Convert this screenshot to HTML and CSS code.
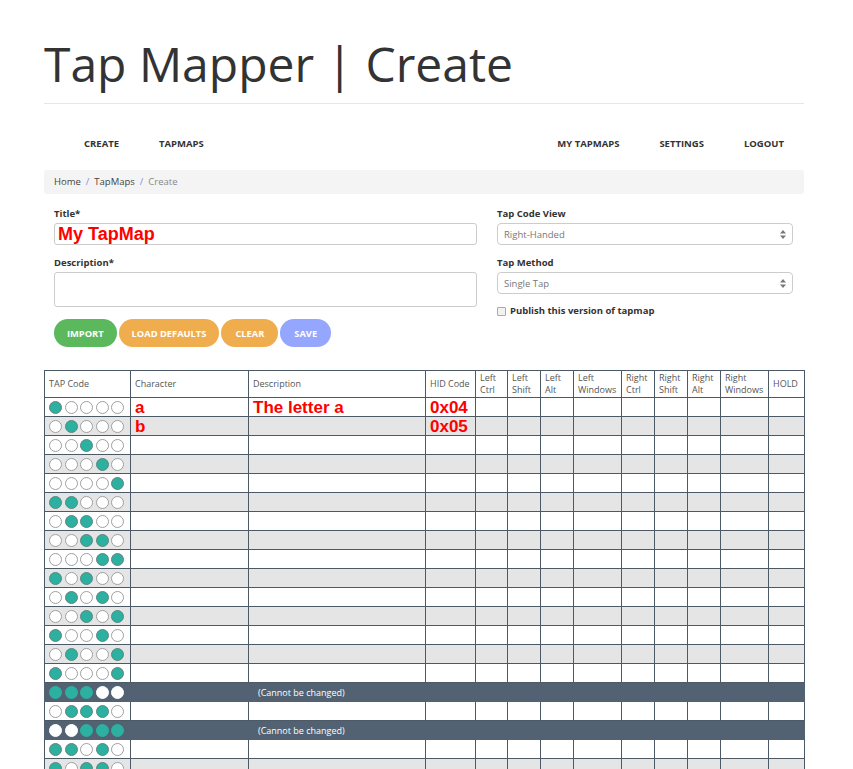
FILE: index.html
```html
<!DOCTYPE html>
<html lang="en">
<head>
  <meta charset="UTF-8" />
  <meta name="viewport" content="width=device-width, initial-scale=1.0"/>
  <title>Tap Mapper | Create</title>
  <link rel="stylesheet" href="styles.css">
</head>
<body>
  <div class="container">
    <h1 class="page-title">Tap Mapper | Create</h1>

    <nav class="navbar">
      <ul class="nav">
        <li>CREATE</li>
        <li>TAPMAPS</li>
      </ul>
      <ul class="nav">
        <li>MY TAPMAPS</li>
        <li>SETTINGS</li>
        <li>LOGOUT</li>
      </ul>
    </nav>

    <ol class="breadcrumb">
      <li><a href="#">Home</a></li>
      <li><a href="#">TapMaps</a></li>
      <li class="active">Create</li>
    </ol>

    <div class="form-row">
      <div class="col-left">
        <div class="form-group">
          <label>Title*</label>
          <div class="input title-input">My TapMap</div>
        </div>
        <div class="form-group">
          <label>Description*</label>
          <div class="input textarea"></div>
        </div>
        <div class="btn-group">
          <button class="btn btn-green">IMPORT</button>
          <button class="btn btn-orange">LOAD DEFAULTS</button>
          <button class="btn btn-orange btn-wide">CLEAR</button>
          <button class="btn btn-blue btn-wide">SAVE</button>
        </div>
      </div>

      <div class="col-right">
        <div class="form-group">
          <label>Tap Code View</label>
          <div class="input select">
            <span>Right-Handed</span>
            <svg width="6" height="9" viewBox="0 0 6 9"><path d="M3 0 L6 3.5 L0 3.5 Z M3 9 L6 5.5 L0 5.5 Z" fill="#777"/></svg>
          </div>
        </div>
        <div class="form-group">
          <label>Tap Method</label>
          <div class="input select">
            <span>Single Tap</span>
            <svg width="6" height="9" viewBox="0 0 6 9"><path d="M3 0 L6 3.5 L0 3.5 Z M3 9 L6 5.5 L0 5.5 Z" fill="#777"/></svg>
          </div>
        </div>
        <div class="check-row">
          <span class="checkbox"></span>
          <span>Publish this version of tapmap</span>
        </div>
      </div>
    </div>

    <table class="tapmap">
      <colgroup>
        <col style="width:86px"><col style="width:118px"><col style="width:177px"><col style="width:50px">
        <col style="width:32px"><col style="width:33px"><col style="width:33px"><col style="width:48px">
        <col style="width:33px"><col style="width:33px"><col style="width:33px"><col style="width:48px">
        <col style="width:36px">
      </colgroup>
      <thead>
        <tr>
          <th>TAP Code</th>
          <th>Character</th>
          <th>Description</th>
          <th>HID Code</th>
          <th>Left Ctrl</th>
          <th>Left Shift</th>
          <th>Left Alt</th>
          <th>Left Windows</th>
          <th>Right Ctrl</th>
          <th>Right Shift</th>
          <th>Right Alt</th>
          <th>Right Windows</th>
          <th>HOLD</th>
        </tr>
      </thead>
      <tbody id="rows"></tbody>
    </table>
  </div>

  <script>
    const codes = [
      "10000", "01000", "00100", "00010", "00001",
      "11000", "01100", "00110", "00011", "10100",
      "01010", "00101", "10010", "01001", "10001",
      "11100", "01110", "00111", "11010", "10110",
      "10011", "11001", "01101", "01011", "11110"
    ];
    const locked = ["11100", "00111"];
    const values = {
      "10000": { ch: "a", desc: "The letter a", hid: "0x04" },
      "01000": { ch: "b", desc: "", hid: "0x05" }
    };

    const body = document.getElementById("rows");
    codes.forEach(code => {
      const tr = document.createElement("tr");
      const dots = code.split("").map(c =>
        `<span class="dot${c === "1" ? " on" : ""}"></span>`).join("");
      if (locked.includes(code)) {
        tr.className = "locked";
        tr.innerHTML = `<td class="tap">${dots}</td><td></td>
          <td class="note">(Cannot be changed)</td>` + "<td></td>".repeat(10);
      } else {
        const v = values[code] || { ch: "", desc: "", hid: "" };
        tr.innerHTML = `<td class="tap">${dots}</td>
          <td class="val">${v.ch}</td>
          <td class="val">${v.desc}</td>
          <td class="val">${v.hid}</td>` + "<td></td>".repeat(9);
      }
      body.appendChild(tr);
    });
  </script>
</body>
</html>
```

FILE: styles.css
```css
body {
  margin: 0;
  font-family: "Open Sans", "DejaVu Sans", sans-serif;
  color: #333;
  background: #fff;
}

.container {
  width: 760px;
  margin-left: 44px;
}

.page-title {
  margin: 0;
  padding-top: 37px;
  padding-bottom: 13px;
  font-size: 48px;
  font-weight: 400;
  line-height: 53px;
  color: #333;
  border-bottom: 1px solid #e6e6e6;
}

.navbar {
  display: flex;
  justify-content: space-between;
  align-items: center;
  height: 40px;
  margin-top: 19px;
}

.nav {
  display: flex;
  list-style: none;
  margin: 0;
  padding: 0;
}

.nav:first-child {
  padding-left: 20px;
}

.nav li {
  padding: 0 20px;
  font-size: 9.5px;
  font-weight: 700;
  color: #333;
}

.breadcrumb {
  display: flex;
  list-style: none;
  margin: 7px 0 0;
  padding: 0 10px;
  height: 24px;
  line-height: 24px;
  background: #f4f4f4;
  border-radius: 3px;
  font-size: 9.5px;
}

.breadcrumb a {
  color: #444;
  text-decoration: none;
}

.breadcrumb li + li:before {
  content: "/";
  padding: 0 5px;
  color: #7a8fe0;
}

.breadcrumb .active {
  color: #888;
}

.form-row {
  display: flex;
  gap: 20px;
  padding: 0 10px;
  margin-top: 13px;
}

.col-left {
  width: 423px;
}

.col-right {
  width: 296px;
}

.form-group {
  margin-bottom: 11px;
}

.form-group label {
  display: block;
  font-size: 9.5px;
  font-weight: 700;
  line-height: 14px;
  margin-bottom: 2px;
  color: #333;
}

.input {
  box-sizing: border-box;
  height: 22px;
  border: 1px solid #ccc;
  border-radius: 3px;
  padding: 0 3px;
  background: #fff;
}

.title-input {
  font-family: "Liberation Sans", Arial, sans-serif;
  font-weight: 700;
  font-size: 18px;
  line-height: 21px;
  color: #ff0000;
}

.textarea {
  height: 35px;
}

.select {
  display: flex;
  justify-content: space-between;
  align-items: center;
  padding: 0 6px;
  font-size: 9.5px;
  color: #777;
  border-radius: 4px;
}

.btn-group {
  display: flex;
  gap: 2px;
  margin-top: 12px;
}

.btn {
  height: 28px;
  padding: 0 13px;
  border: none;
  border-radius: 14px;
  font-family: "Open Sans", sans-serif;
  font-size: 9.3px;
  font-weight: 700;
  color: #fff;
  cursor: pointer;
}

.btn-wide {
  padding: 0 14px;
}

.btn-green {
  background: #5cb85c;
}

.btn-orange {
  background: #f0ad4e;
}

.btn-blue {
  background: #95a6ff;
}

.check-row {
  display: flex;
  align-items: center;
  gap: 4px;
  margin-top: 0;
  font-size: 9.5px;
  font-weight: 700;
  line-height: 12px;
}

.checkbox {
  display: inline-block;
  width: 7px;
  height: 7px;
  border: 1px solid #aaa;
  border-radius: 1px;
  background: #f2f2f2;
}

.tapmap {
  margin-top: 23px;
  width: 760px;
  table-layout: fixed;
  border-collapse: collapse;
  font-size: 9px;
}

.tapmap th,
.tapmap td {
  border: 1px solid #4c5a68;
  padding: 0 4px;
  text-align: left;
  vertical-align: middle;
}

.tapmap th {
  height: 26px;
  font-weight: 400;
  line-height: 12px;
  color: #555;
}

.tapmap tbody tr {
  height: 19px;
}

.tapmap tbody tr:nth-child(even) {
  background: #e5e5e5;
}

.tapmap td.tap {
  padding: 0 0 0 4px;
  line-height: 0;
  white-space: nowrap;
}

.dot {
  display: inline-block;
  box-sizing: border-box;
  width: 13px;
  height: 13px;
  margin-right: 2.5px;
  border: 1px solid #a0a0a0;
  border-radius: 50%;
  background: #fff;
}

.dot.on {
  background: #2cb1a1;
  border-color: #5f8581;
}

.val {
  font-family: "Liberation Sans", Arial, sans-serif;
  font-weight: 700;
  font-size: 17px;
  line-height: 17px;
  color: #ff0000;
}

.tapmap tr.locked {
  background: #526272 !important;
}

.tapmap tr.locked td {
  border-color: #526272;
}

.tapmap tr.locked .dot {
  border-color: #fff;
}

.tapmap tr.locked .dot.on {
  border-color: #2cb1a1;
}

.tapmap tr.locked td.note {
  padding-left: 9px;
  color: #fff;
  font-size: 9px;
}
```
